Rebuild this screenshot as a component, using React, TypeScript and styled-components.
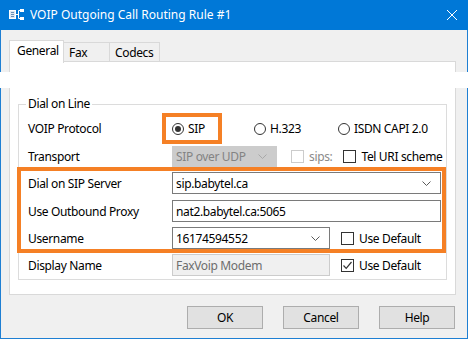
import React from 'react';
import styled, { createGlobalStyle } from 'styled-components';

const GlobalStyle = createGlobalStyle`
  html, body { margin: 0; padding: 0; background: #ffffff; }
  body { font-family: "Noto Sans", "Segoe UI", sans-serif; font-size: 12px; color: #000; letter-spacing: -0.35px; }
  * { box-sizing: border-box; }
`;

const ORANGE = '#f58025';

const Window = styled.div`
  position: relative;
  width: 468px;
  height: 339px;
  background: #f0f0f0;
  display: flex;
  flex-direction: column;
  overflow: hidden;
`;

const TitleBar = styled.div`
  height: 30px;
  flex: none;
  background: #0078d7;
  display: flex;
  align-items: center;
  padding: 0 11px 0 9px;
  color: #ffffff;
`;

const Title = styled.div`
  flex: 1;
  margin-left: 5px;
  font-size: 12px;
  line-height: 16px;
  letter-spacing: 0;
  white-space: nowrap;
`;

const Frame = styled.div`
  flex: 1;
  display: flex;
  flex-direction: column;
  border: 1px solid #1e7fd3;
  border-top: none;
  padding: 9px 10px 0 8px;
`;

const TabStrip = styled.div`
  height: 23px;
  display: flex;
  align-items: flex-end;
`;

const Tab = styled.div<{ $active?: boolean; $w: number }>`
  position: relative;
  z-index: ${p => (p.$active ? 2 : 1)};
  width: ${p => p.$w}px;
  height: ${p => (p.$active ? 23 : 20)}px;
  margin-bottom: ${p => (p.$active ? -1 : 0)}px;
  background: ${p => (p.$active ? '#ffffff' : '#f0f0f0')};
  border: 1px solid #d9d9d9;
  border-bottom: ${p => (p.$active ? 'none' : '1px solid #d9d9d9')};
  border-left: ${p => (p.$active ? '1px solid #d9d9d9' : 'none')};
  padding-left: ${p => (p.$active ? 7 : 5)}px;
  line-height: ${p => (p.$active ? 20 : 19)}px;
  white-space: nowrap;
`;

const Panel = styled.div`
  width: 447px;
  margin-top: -1px;
  background: #ffffff;
  border: 1px solid #d9d9d9;
  padding: 0 8px 14px 8px;
`;

const GroupBox = styled.div`
  position: relative;
  margin-top: 42px;
  border: 1px solid #dcdcdc;
  padding: 8px 0 3px 9px;
  display: flex;
  flex-direction: column;
`;

const Legend = styled.div`
  position: absolute;
  top: -9px;
  left: 7px;
  padding: 0 2px;
  background: #ffffff;
  line-height: 16px;
`;

const Row = styled.div<{ $h: number; $mt?: number }>`
  display: flex;
  align-items: center;
  height: ${p => p.$h}px;
  margin-top: ${p => p.$mt ?? 0}px;
`;

const Label = styled.div`
  width: 144px;
  flex: none;
  white-space: nowrap;
`;

const Highlight = styled.div`
  border: 4px solid ${ORANGE};
`;

const BigHighlight = styled(Highlight)`
  margin-left: -11px;
  padding: 1px 1px 0 7px;
  display: flex;
  flex-direction: column;
  gap: 5px;
`;

const SipHighlight = styled(Highlight)`
  margin-left: -10px;
  width: 60px;
  height: 31px;
  display: flex;
  align-items: center;
  padding-left: 6px;
`;

const Option = styled.div<{ $ml?: number; $disabled?: boolean }>`
  display: flex;
  align-items: center;
  margin-left: ${p => p.$ml ?? 0}px;
  color: ${p => (p.$disabled ? '#8a8a8a' : '#000')};
  white-space: nowrap;
`;

const RadioDot = styled.span<{ $checked?: boolean }>`
  flex: none;
  width: 12px;
  height: 12px;
  border-radius: 50%;
  border: 1px solid #333333;
  background: #ffffff;
  display: inline-flex;
  align-items: center;
  justify-content: center;
  margin-right: 4px;
  &::after {
    content: '';
    width: 6px;
    height: 6px;
    border-radius: 50%;
    background: ${p => (p.$checked ? '#333333' : 'transparent')};
  }
`;

const CheckBox = styled.span<{ $disabled?: boolean }>`
  flex: none;
  width: 13px;
  height: 13px;
  border: 1px solid ${p => (p.$disabled ? '#cccccc' : '#333333')};
  background: #ffffff;
  display: inline-flex;
  align-items: center;
  justify-content: center;
  margin-right: 5px;
`;

const Field = styled.div<{ $w: number; $variant?: 'normal' | 'disabledCombo' | 'disabledText' }>`
  width: ${p => p.$w}px;
  height: 100%;
  flex: none;
  display: flex;
  align-items: center;
  padding: 0 9px 0 3px;
  border: 1px solid
    ${p => (p.$variant === 'disabledCombo' ? '#cccccc' : p.$variant === 'disabledText' ? '#cccccc' : '#7a7a7a')};
  background: ${p =>
    p.$variant === 'disabledCombo' ? '#cccccc' : p.$variant === 'disabledText' ? '#f0f0f0' : '#ffffff'};
  color: ${p =>
    p.$variant === 'disabledCombo' ? '#838383' : p.$variant === 'disabledText' ? '#6d6d6d' : '#000000'};
  white-space: nowrap;
`;

const FieldText = styled.span`
  flex: 1;
`;

const ButtonRow = styled.div`
  display: flex;
  justify-content: flex-end;
  gap: 20px;
  margin-top: 11px;
  padding-right: 2px;
`;

const Button = styled.div`
  width: 76px;
  height: 23px;
  background: #e1e1e1;
  border: 1px solid #adadad;
  display: flex;
  align-items: center;
  justify-content: center;
`;

const Band = styled.div`
  position: absolute;
  left: 0;
  top: 72px;
  width: 468px;
  height: 16px;
  background: #ffffff;
  z-index: 5;
`;

const Chevron = ({ color }: { color: string }) => (
  <svg width="9" height="5" viewBox="0 0 9 5" style={{ flex: 'none' }}>
    <path d="M0.5 0.5 L4.5 4.5 L8.5 0.5" fill="none" stroke={color} strokeWidth="1" />
  </svg>
);

const Check = () => (
  <svg width="11" height="11" viewBox="0 0 11 11">
    <path d="M1.5 5.5 L4.2 8.3 L9.5 2" fill="none" stroke="#333" strokeWidth="1.2" />
  </svg>
);

const AppIcon = () => (
  <svg width="16" height="12" viewBox="0 0 16 12" style={{ flex: 'none' }}>
    <rect x="0.5" y="1.5" width="6" height="8" fill="#dfe8f2" stroke="#ffffff" strokeWidth="1" />
    <rect x="2" y="3" width="3" height="1" fill="#6a8fb5" />
    <rect x="2" y="5" width="3" height="1" fill="#6a8fb5" />
    <rect x="2" y="7" width="3" height="1" fill="#6a8fb5" />
    <path d="M7 5.5 H9.5 M9.5 1.5 V9.5 M9.5 1.5 H11 M9.5 9.5 H11" stroke="#ffffff" strokeWidth="1" fill="none" />
    <rect x="11" y="0" width="4" height="3" fill="#ffffff" />
    <rect x="11" y="8" width="4" height="3" fill="#ffffff" />
  </svg>
);

const CloseIcon = () => (
  <svg width="10" height="10" viewBox="0 0 10 10" style={{ flex: 'none' }}>
    <path d="M0 0 L10 10 M10 0 L0 10" stroke="#ffffff" strokeWidth="1" />
  </svg>
);

export default function App() {
  return (
    <>
      <GlobalStyle />
      <Window>
        <TitleBar>
          <AppIcon />
          <Title>VOIP Outgoing Call Routing Rule #1</Title>
          <CloseIcon />
        </TitleBar>
        <Frame>
          <TabStrip>
            <Tab $active $w={55}>General</Tab>
            <Tab $w={46}>Fax</Tab>
            <Tab $w={50}>Codecs</Tab>
          </TabStrip>
          <Panel>
            <GroupBox>
              <Legend>Dial on Line</Legend>
              <Row $h={31}>
                <Label>VOIP Protocol</Label>
                <SipHighlight>
                  <Option>
                    <RadioDot $checked />
                    SIP
                  </Option>
                </SipHighlight>
                <Option $ml={32}>
                  <RadioDot />
                  H.323
                </Option>
                <Option $ml={37}>
                  <RadioDot />
                  ISDN CAPI 2.0
                </Option>
              </Row>
              <Row $h={21} $mt={2}>
                <Label>Transport</Label>
                <Field $w={105} $variant="disabledCombo">
                  <FieldText>SIP over UDP</FieldText>
                  <Chevron color="#a8a8a8" />
                </Field>
                <Option $ml={14} $disabled>
                  <CheckBox $disabled />
                  sips:
                </Option>
                <Option $ml={11}>
                  <CheckBox />
                  Tel URI scheme
                </Option>
              </Row>
              <BigHighlight>
                <Row $h={22}>
                  <Label>Dial on SIP Server</Label>
                  <Field $w={269}>
                    <FieldText>sip.babytel.ca</FieldText>
                    <Chevron color="#5a5a5a" />
                  </Field>
                </Row>
                <Row $h={22} $mt={1}>
                  <Label>Use Outbound Proxy</Label>
                  <Field $w={269}>
                    <FieldText>nat2.babytel.ca:5065</FieldText>
                  </Field>
                </Row>
                <Row $h={22}>
                  <Label>Username</Label>
                  <Field $w={158}>
                    <FieldText>16174594552</FieldText>
                    <Chevron color="#5a5a5a" />
                  </Field>
                  <Option $ml={11}>
                    <CheckBox />
                    Use Default
                  </Option>
                </Row>
              </BigHighlight>
              <Row $h={22} $mt={1}>
                <Label>Display Name</Label>
                <Field $w={158} $variant="disabledText">
                  <FieldText>FaxVoip Modem</FieldText>
                </Field>
                <Option $ml={11}>
                  <CheckBox>
                    <Check />
                  </CheckBox>
                  Use Default
                </Option>
              </Row>
            </GroupBox>
          </Panel>
          <ButtonRow>
            <Button>OK</Button>
            <Button>Cancel</Button>
            <Button>Help</Button>
          </ButtonRow>
        </Frame>
        <Band />
      </Window>
    </>
  );
}
